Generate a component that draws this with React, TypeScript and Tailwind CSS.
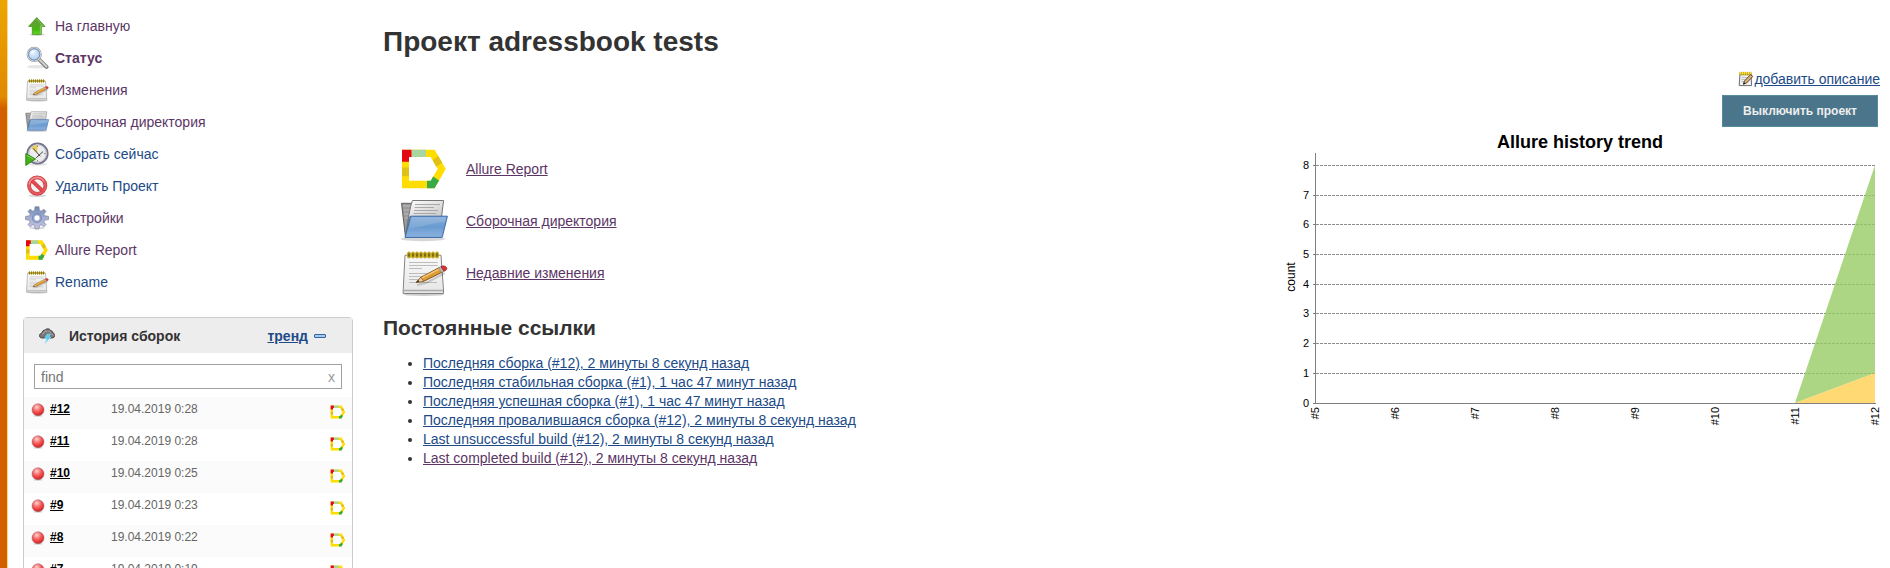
import React from "react";

type IconProps = { className?: string };

const small = "block size-6 shrink-0";
const large = "block size-12 shrink-0";

function AllureIcon({ className = small }: IconProps) {
  return (
    <svg viewBox="0 0 48 48" className={className} aria-hidden="true">
      <path d="M2 4.7H34.6L45.7 24 34.6 43.3H2ZM9 12V35.7H30.7L37.7 24 30.7 12Z" fill="#ffdd00" fillRule="evenodd" />
      <path d="M2 4.7H11.7V12H9V16.7H2Z" fill="#e30613" />
      <path d="M11.7 4.7H26V12H11.7Z" fill="#a8d5a2" />
      <path d="M2 22.5H9V31.2H2Z" fill="#dec016" />
      <path d="M38.3 11L42.2 17.8 36.2 21.5 32.6 15.3Z" fill="#dec016" />
      <path d="M27 35.7H30.7L33.2 31.5 39 35.6 34.6 43.3H27Z" fill="#3aaa49" />
    </svg>
  );
}

function FolderIcon({ className = small }: IconProps) {
  return (
    <svg viewBox="0 0 48 48" className={className} aria-hidden="true">
      <defs>
        <linearGradient id="folderFront" x1="0" y1="0" x2="0" y2="1">
          <stop offset="0" stopColor="#84acd9" />
          <stop offset="0.5" stopColor="#6a9bd0" />
          <stop offset="1" stopColor="#8cb2df" />
        </linearGradient>
        <linearGradient id="folderPaper" x1="0" y1="0" x2="0.5" y2="1">
          <stop offset="0" stopColor="#ffffff" />
          <stop offset="1" stopColor="#b9b9b9" />
        </linearGradient>
      </defs>
      <ellipse cx="23" cy="42" rx="22" ry="2.2" fill="#000" opacity="0.16" />
      <path d="M1.5 6.3H12L14 9H38V40H5.5Z" fill="#9a9a9a" stroke="#5f5f5f" />
      <path d="M3 9H12M4 13H11M4 17H11M5 21H10" stroke="#bdbdbd" />
      <path d="M12.5 3.5H43.6L41.5 20H9L6 36C8 22 10 10 12.5 3.5Z" fill="url(#folderPaper)" stroke="#777" />
      <path d="M15 7.5H40M14.6 10.5H34M14 13.5H38M13.6 16.5H36" stroke="#a2a2a2" strokeWidth="0.9" />
      <path d="M10.7 19.2H47.4L42.2 40.4H5Z" fill="url(#folderFront)" stroke="#3a6ba8" strokeLinejoin="round" />
      <path d="M11.6 20.3H46L45 25C32 25 23 31 9 31Z" fill="#fff" opacity="0.14" />
    </svg>
  );
}

function NotepadIcon({ className = small }: IconProps) {
  return (
    <svg viewBox="0 0 48 48" className={className} aria-hidden="true">
      <defs>
        <linearGradient id="padSheet" x1="0" y1="0" x2="0" y2="1">
          <stop offset="0" stopColor="#f9f9f9" />
          <stop offset="1" stopColor="#e6e6e6" />
        </linearGradient>
      </defs>
      <ellipse cx="24" cy="45.4" rx="20" ry="1.6" fill="#000" opacity="0.2" />
      <path d="M5 6.3H41L43.5 41V44.5H3.2V41Z" fill="url(#padSheet)" stroke="#858585" strokeLinejoin="round" />
      <path d="M4 41.5H43" stroke="#aaa" strokeWidth="1.6" />
      <path d="M9 13.5H37.5M9 16.5H37.5M9 19.5H22M9 24.5H35M9 27.5H30M9 30.5H24M9 33.5H37" stroke="#bcbcbc" strokeWidth="1" />
      {[8.5, 12.5, 16.5, 20.5, 24.5, 28.5, 32.5, 36.5].map((x) => (
        <ellipse key={x} cx={x + 0.5} cy="6" rx="1.4" ry="2.8" fill="#4f4510" stroke="#c4ab22" strokeWidth="1.5" />
      ))}
      <path d="M17 36L26 34 45 24" stroke="#000" strokeWidth="2" opacity="0.16" fill="none" />
      <path d="M16.3 33.4L21 28.2 40 18.2 43 22.8 23.5 32.4Z" fill="#dd9b38" stroke="#7b4d14" strokeWidth="0.9" strokeLinejoin="round" />
      <path d="M21.5 29.2L40.5 19.4" stroke="#f5c877" strokeWidth="1.4" />
      <path d="M16.3 33.4L21 28.2 23.5 32.4Z" fill="#eed1a2" stroke="#7b4d14" strokeWidth="0.6" />
      <path d="M16 33.6L18.4 31 19.4 32.6Z" fill="#222" />
      <path d="M38.6 18.8L41 17.6 44 22.2 41.6 23.4Z" fill="#bcbcbc" stroke="#777" strokeWidth="0.5" />
      <path d="M41 17.6C43.5 15.8 47.6 17.8 46.6 20.2 46.3 21.2 45.2 21.7 44 22.2Z" fill="#e0322c" stroke="#8f1713" strokeWidth="0.7" />
    </svg>
  );
}

function UpIcon() {
  return (
    <svg viewBox="0 0 24 24" className={small} aria-hidden="true">
      <defs>
        <linearGradient id="upFill" x1="0" y1="0" x2="0" y2="1">
          <stop offset="0" stopColor="#5d9e35" />
          <stop offset="0.45" stopColor="#5aa52c" />
          <stop offset="0.7" stopColor="#42b80c" />
          <stop offset="1" stopColor="#69d332" />
        </linearGradient>
      </defs>
      <ellipse cx="12" cy="20.6" rx="8" ry="1.3" fill="#000" opacity="0.16" />
      <path d="M11.8 3.6L20 12.4H16.3V20.4H7.3V12.4H3.6Z" fill="url(#upFill)" stroke="#4d9b22" strokeWidth="0.9" strokeLinejoin="round" />
      <path d="M11.8 5L17.8 11.6H15.4V19.5" fill="none" stroke="#a5dc80" strokeWidth="0.6" />
    </svg>
  );
}

function SearchIcon() {
  return (
    <svg viewBox="0 0 24 24" className={small} aria-hidden="true">
      <defs>
        <radialGradient id="lens" cx="0.4" cy="0.35" r="0.75">
          <stop offset="0" stopColor="#eaf3fd" />
          <stop offset="1" stopColor="#9fc3ea" />
        </radialGradient>
      </defs>
      <ellipse cx="12" cy="20.8" rx="10" ry="1.7" fill="#000" opacity="0.1" />
      <path d="M14.4 13.8L21.5 20.9" stroke="#7e7e7e" strokeWidth="4" strokeLinecap="round" />
      <path d="M14.8 14L21.4 20.5" stroke="#d4d4d4" strokeWidth="2" strokeLinecap="round" strokeDasharray="3 1" />
      <circle cx="9.2" cy="8.4" r="6.6" fill="url(#lens)" stroke="#959595" strokeWidth="2" />
      <circle cx="9.2" cy="8.4" r="6.6" fill="none" stroke="#dedede" strokeWidth="1" />
      <circle cx="9.2" cy="8.4" r="5.5" fill="none" stroke="#5b8cc9" strokeWidth="0.8" />
      <path d="M5.5 8C6 5 8.5 4 11 4.4 9 6 8 7 5.5 8Z" fill="#fff" opacity="0.7" />
    </svg>
  );
}

function ClockIcon() {
  return (
    <svg viewBox="0 0 24 24" className={small} aria-hidden="true">
      <ellipse cx="13" cy="22.4" rx="9" ry="1.2" fill="#000" opacity="0.12" />
      <circle cx="12.5" cy="11.5" r="10.2" fill="#ededed" stroke="#73738b" strokeWidth="1.8" />
      <circle cx="12.5" cy="11.5" r="8.6" fill="none" stroke="#c4c4cc" strokeWidth="1" />
      <path d="M12.3 11.5L6.2 5.8A8.4 8.4 0 0 1 12.3 3.1Z" fill="#e8cf57" />
      <path d="M8.5 6.7L15 14M11.5 15.5L17.8 9.8" stroke="#444" strokeWidth="1" strokeLinecap="round" />
      <path d="M12.5 3.6V5M20.4 11.5H19M12.5 19.4V18" stroke="#777" strokeWidth="0.9" />
      <path d="M0.8 11.6L10.6 17 0.8 23.4Z" fill="#43b21b" stroke="#2c7d10" strokeWidth="0.9" strokeLinejoin="round" />
      <path d="M1.8 13.4L8.4 17" stroke="#93df70" strokeWidth="0.8" />
    </svg>
  );
}

function ForbiddenIcon() {
  return (
    <svg viewBox="0 0 24 24" className={small} aria-hidden="true">
      <ellipse cx="12.2" cy="21.8" rx="9" ry="1.4" fill="#000" opacity="0.15" />
      <circle cx="12.2" cy="11.6" r="8.2" fill="#f7f2f2" stroke="#c63b41" strokeWidth="3.8" />
      <path d="M6.3 6L18 17.4" stroke="#c63b41" strokeWidth="3.8" />
      <circle cx="12.2" cy="11.6" r="8.2" fill="none" stroke="#e5595d" strokeWidth="2.6" />
      <path d="M6.3 6L18 17.4" stroke="#e2484d" strokeWidth="2.6" />
      <path d="M4.2 10.5A8 8 0 0 1 19 7.4" stroke="#f0979a" strokeWidth="1.2" fill="none" />
    </svg>
  );
}

function GearIcon() {
  return (
    <svg viewBox="0 0 24 24" className={small} aria-hidden="true">
      <defs>
        <linearGradient id="gearFill" x1="0" y1="0" x2="0" y2="1">
          <stop offset="0" stopColor="#7188ad" />
          <stop offset="0.5" stopColor="#a5afd0" />
          <stop offset="1" stopColor="#c5c3de" />
        </linearGradient>
      </defs>
      <ellipse cx="12" cy="22" rx="8" ry="1.5" fill="#000" opacity="0.14" />
      <path
        fill="url(#gearFill)"
        stroke="#7a84a8"
        strokeWidth="0.7"
        strokeLinejoin="round"
        fillRule="evenodd"
        d="M9.6 4.4L10 0.8H14L14.4 4.4 16.2 5.2 18.8 3.2 21 5.4 18.8 8 19.6 9.8 23.5 10.4V13.6L19.6 14.2 18.8 16 21 18.6 18.8 20.8 16.2 18.8 14.4 19.6 14 22.8H10L9.6 19.6 7.8 18.8 5.2 20.8 3 18.6 5.2 16 4.4 14.2 0.5 13.6V10.4L4.4 9.8 5.2 8 3 5.4 5.2 3.2 7.8 5.2ZM12 8.8A3.2 3.2 0 1 0 12 15.2 3.2 3.2 0 1 0 12 8.8Z"
      />
      <circle cx="12" cy="12" r="4.4" fill="none" stroke="#7890c4" strokeWidth="1.2" />
    </svg>
  );
}

function StormIcon() {
  return (
    <svg viewBox="0 0 16 16" className="block size-4 shrink-0" aria-hidden="true">
      <path
        d="M3.2 10C1 10 0.3 8.6 0.5 7.4 0.6 6 1.8 5.3 2.8 5.3 3 3.2 4.6 1.8 6.2 2 7.2 0.4 10.8 0.2 11.8 2.8 13.2 2.6 14 4 13.8 5 15.8 5.4 16 7 15.6 8.2 15 9.8 13.6 10 12.4 10Z"
        fill="#777"
        stroke="#3e3e3e"
        strokeWidth="0.9"
      />
      <path d="M3 6.4C4 5 5 6 5.4 4 6.4 2.4 8 3 8.4 4M9.5 3.2C11 2.8 11.6 4.2 11.4 5.4M12 6.4C13 6 14 6.4 14.4 7.4" fill="none" stroke="#b4b4b4" strokeWidth="1" />
      <path d="M8 6.2H11.4L9.8 9H12L6 15.6 7.8 11H5.6Z" fill="#58cdf6" stroke="#a5e6fb" strokeWidth="0.5" />
    </svg>
  );
}

function EditIcon() {
  return (
    <svg viewBox="0 0 16 16" className="block size-4 shrink-0" aria-hidden="true">
      <path d="M2 2.6H13L13.6 14.6H1.2Z" fill="#f1f1f1" stroke="#6d6d6d" strokeLinejoin="round" />
      <path d="M3.4 6.5H10M3.4 8.5H8M3.4 10.5H7" stroke="#b4b4b4" strokeWidth="0.8" />
      <path d="M1.4 2.6H13.4" stroke="#a58c12" strokeWidth="3.4" />
      <path d="M1.6 2.2H13.2" stroke="#f7e043" strokeWidth="2.6" strokeDasharray="1.5 0.5" />
      <path d="M5.4 13.2L6.4 10 12.6 3.6 14.8 5.4 8.6 12Z" fill="#d9b27a" stroke="#4a3b28" strokeWidth="0.9" strokeLinejoin="round" />
      <path d="M5.2 13.4L6 11.2 7.4 12.4Z" fill="#111" />
    </svg>
  );
}

function RedBall() {
  return (
    <svg viewBox="0 0 14 14" className="block size-3.5 shrink-0" role="img" aria-label="Failed">
      <defs>
        <radialGradient id="ball" cx="0.4" cy="0.28" r="0.7">
          <stop offset="0" stopColor="#ffd5d5" />
          <stop offset="0.45" stopColor="#f56a6a" />
          <stop offset="0.85" stopColor="#e82e2e" />
          <stop offset="1" stopColor="#b53030" />
        </radialGradient>
      </defs>
      <ellipse cx="7" cy="12.8" rx="5" ry="0.9" fill="#000" opacity="0.15" />
      <circle cx="7" cy="6.8" r="6" fill="url(#ball)" stroke="#9b5a5a" strokeWidth="0.5" />
    </svg>
  );
}

const visited = "text-[#5c3566]";
const unvisited = "text-[#204a87]";

const tasks = [
  { label: "На главную", icon: <UpIcon />, tone: visited },
  { label: "Статус", icon: <SearchIcon />, tone: "font-bold text-[#5c3566]" },
  { label: "Изменения", icon: <NotepadIcon />, tone: visited },
  { label: "Сборочная директория", icon: <FolderIcon />, tone: visited },
  { label: "Собрать сейчас", icon: <ClockIcon />, tone: unvisited },
  { label: "Удалить Проект", icon: <ForbiddenIcon />, tone: unvisited },
  { label: "Настройки", icon: <GearIcon />, tone: visited },
  { label: "Allure Report", icon: <AllureIcon />, tone: visited },
  { label: "Rename", icon: <NotepadIcon />, tone: unvisited },
];

const builds = [
  ["#12", "19.04.2019 0:28"],
  ["#11", "19.04.2019 0:28"],
  ["#10", "19.04.2019 0:25"],
  ["#9", "19.04.2019 0:23"],
  ["#8", "19.04.2019 0:22"],
  ["#7", "19.04.2019 0:19"],
];

const shortcuts = [
  { label: "Allure Report", icon: <AllureIcon className={large} /> },
  { label: "Сборочная директория", icon: <FolderIcon className={large} /> },
  { label: "Недавние изменения", icon: <NotepadIcon className={large} /> },
];

const permalinks = [
  { label: "Последняя сборка (#12), 2 минуты 8 секунд назад", tone: unvisited },
  { label: "Последняя стабильная сборка (#1), 1 час 47 минут назад", tone: unvisited },
  { label: "Последняя успешная сборка (#1), 1 час 47 минут назад", tone: unvisited },
  { label: "Последняя провалившаяся сборка (#12), 2 минуты 8 секунд назад", tone: unvisited },
  { label: "Last unsuccessful build (#12), 2 минуты 8 секунд назад", tone: unvisited },
  { label: "Last completed build (#12), 2 минуты 8 секунд назад", tone: visited },
];

const gridY = [273, 243, 213, 183, 154, 124, 94, 65, 35];
const ticks = ["#5", "#6", "#7", "#8", "#9", "#10", "#11", "#12"];

function TrendChart() {
  return (
    <svg viewBox="0 0 600 300" className="block h-[300px] w-[600px]" role="img" aria-label="Allure history trend">
      <text x="300" y="18" textAnchor="middle" fontSize="18" fontWeight="700" fill="#000">
        Allure history trend
      </text>
      {gridY.map((y, value) => (
        <g key={y}>
          {value > 0 && <path d={`M36 ${y + 0.5}H595`} stroke="#8c8c8c" strokeDasharray="3 1" />}
          <path d={`M33 ${y + 0.5}H36`} stroke="#808080" />
          <text x="29" y={y + 4} textAnchor="end" fontSize="11" fill="#000">
            {value}
          </text>
        </g>
      ))}
      <path d="M515 273L595 35V243Z" fill="#97cc64" fillOpacity="0.8" />
      <path d="M515 273L595 243V273Z" fill="#ffd050" fillOpacity="0.8" />
      <path d="M35.5 23V273.5H596" fill="none" stroke="#808080" />
      {ticks.map((tick, i) => (
        <text key={tick} transform={`translate(${39 + i * 80} 277) rotate(-90)`} textAnchor="end" fontSize="11" fill="#000">
          {tick}
        </text>
      ))}
      <text transform="translate(15 147) rotate(-90)" textAnchor="middle" fontSize="12" fill="#000">
        count
      </text>
    </svg>
  );
}

function BuildHistory() {
  return (
    <section className="mt-[19px] rounded-t border border-[#ccc]">
      <header className="flex h-[35px] items-center bg-[#ededed] pr-[26px] pl-[15px]">
        <StormIcon />
        <h2 className="ml-[14px] flex-1 font-bold">История сборок</h2>
        <a href="#trend" className="font-bold text-[#204a87] underline">тренд</a>
        <button type="button" aria-label="Свернуть" className="ml-1.5 h-1 w-3 rounded-[1px] border border-[#3465a4] bg-[#a9c5e8]" />
      </header>
      <div className="px-2.5 pt-[11px] pb-2">
        <div className="flex h-[25px] items-center border border-[#a0a0a0] bg-white px-1.5">
          <input
            type="text"
            aria-label="find"
            placeholder="find"
            className="min-w-0 flex-1 outline-none placeholder:text-[#757575]"
          />
          <button type="button" aria-label="Очистить" className="leading-4 text-[#999]">x</button>
        </div>
      </div>
      <table className="w-full text-xs">
        <tbody>
          {builds.map(([id, date]) => (
            <tr key={id} className="h-8 odd:bg-[#fbfbfb]">
              <td className="w-[26px] pb-1.5 pl-[7px]"><RedBall /></td>
              <td className="w-[61px] pb-2">
                <a href="#build" className="font-bold text-black underline">{id}</a>
              </td>
              <td className="pb-2 text-[#666]">{date}</td>
              <td className="w-[22px] pr-1.5 pb-0.5"><AllureIcon className="block size-4" /></td>
            </tr>
          ))}
        </tbody>
      </table>
    </section>
  );
}

export default function App() {
  return (
    <div className="flex h-screen overflow-hidden bg-white font-['Liberation_Sans',Arial,sans-serif] text-sm text-[#333]">
      <div className="w-2 shrink-0 border-r border-[#ffd98a] bg-linear-to-b from-[#eba500] from-0% via-[#e08a00] via-17% to-[#d45f00] to-19%" />
      <aside className="ml-[15px] w-[330px] shrink-0 pt-2.5">
        <nav>
          {tasks.map(({ label, icon, tone }) => (
            <a key={label} href="#task" className={`flex h-8 items-center gap-1.5 pl-0.5 ${tone}`}>
              {icon}
              {label}
            </a>
          ))}
        </nav>
        <BuildHistory />
      </aside>
      <main className="ml-[30px] flex min-w-0 flex-1 justify-between">
        <div>
          <h1 className="mt-6 text-[28px] leading-9 font-bold">Проект adressbook tests</h1>
          <ul className="mt-[85px] ml-[17px] flex flex-col gap-1">
            {shortcuts.map(({ label, icon }) => (
              <li key={label} className="flex items-center gap-[18px]">
                {icon}
                <a href="#shortcut" className="text-[#5c3566] underline">{label}</a>
              </li>
            ))}
          </ul>
          <h2 className="mt-4 text-[21px] leading-[30px] font-bold">Постоянные ссылки</h2>
          <ul className="mt-[11px] list-disc pl-10 leading-[19px]">
            {permalinks.map(({ label, tone }) => (
              <li key={label}>
                <a href="#permalink" className={`underline ${tone}`}>{label}</a>
              </li>
            ))}
          </ul>
        </div>
        <div className="flex shrink-0 flex-col items-end pt-[70px] pr-2.5">
          <a href="#description" className="flex items-center leading-[18px] text-[#204a87] underline">
            <EditIcon />
            добавить описание
          </a>
          <button type="button" className="mt-[7px] mr-0.5 h-8 border border-[#5789a1] bg-[#4b758b] px-5 text-xs font-bold text-[#eee]">
            Выключить проект
          </button>
          <div className="mt-[3px]">
            <TrendChart />
          </div>
        </div>
      </main>
    </div>
  );
}
